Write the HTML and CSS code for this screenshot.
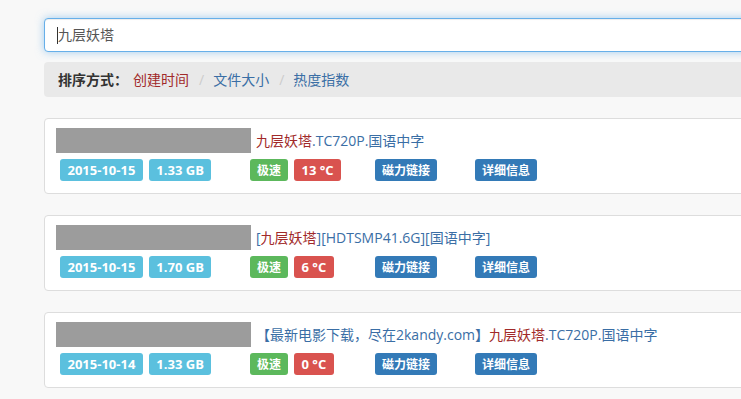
FILE: index.html
```html
<!DOCTYPE html>
<html lang="zh-CN">
<head>
<meta charset="utf-8">
<title>九层妖塔 - 搜索</title>
<link rel="stylesheet" href="styles.css">
</head>
<body>
<div class="page">
  <div class="search-box"><span class="caret"></span><span class="search-text">九层妖塔</span></div>

  <div class="sort-bar">
    <span class="sort-label">排序方式：</span>
    <a class="sort-item active" href="#">创建时间</a>
    <span class="sep">/</span>
    <a class="sort-item" href="#">文件大小</a>
    <span class="sep">/</span>
    <a class="sort-item" href="#">热度指数</a>
  </div>

  <div class="card">
    <div class="card-title">
      <span class="mask"></span>
      <a class="title-link" href="#"><span class="hl">九层妖塔</span>.TC720P.国语中字</a>
    </div>
    <div class="card-meta">
      <div class="meta-group"><span class="label info latin">2015-10-15</span><span class="label info latin">1.33 GB</span></div>
      <div class="meta-group"><span class="label success">极速</span><span class="label danger latin">13 °C</span></div>
      <div class="meta-group"><span class="label primary">磁力链接</span></div>
      <div class="meta-group"><span class="label primary">详细信息</span></div>
    </div>
  </div>

  <div class="card">
    <div class="card-title">
      <span class="mask"></span>
      <a class="title-link" href="#">[<span class="hl">九层妖塔</span>][HDTSMP41.6G][国语中字]</a>
    </div>
    <div class="card-meta">
      <div class="meta-group"><span class="label info latin">2015-10-15</span><span class="label info latin">1.70 GB</span></div>
      <div class="meta-group"><span class="label success">极速</span><span class="label danger latin">6 °C</span></div>
      <div class="meta-group"><span class="label primary">磁力链接</span></div>
      <div class="meta-group"><span class="label primary">详细信息</span></div>
    </div>
  </div>

  <div class="card">
    <div class="card-title">
      <span class="mask"></span>
      <a class="title-link" href="#">【最新电影下载，尽在2kandy.com】<span class="hl">九层妖塔</span>.TC720P.国语中字</a>
    </div>
    <div class="card-meta">
      <div class="meta-group"><span class="label info latin">2015-10-14</span><span class="label info latin">1.33 GB</span></div>
      <div class="meta-group"><span class="label success">极速</span><span class="label danger latin">0 °C</span></div>
      <div class="meta-group"><span class="label primary">磁力链接</span></div>
      <div class="meta-group"><span class="label primary">详细信息</span></div>
    </div>
  </div>
</div>
</body>
</html>
```

FILE: styles.css
```css
html, body {
  margin: 0;
  padding: 0;
  overflow: hidden;
  background: #f8f8f8;
}

body {
  font-family: "Open Sans", "Noto Sans CJK SC", sans-serif;
  font-size: 14px;
  color: #333;
}

.page {
  width: 1100px;
  padding: 18px 0 0 44px;
  display: flex;
  flex-direction: column;
}

.search-box {
  height: 34px;
  box-sizing: border-box;
  border: 1px solid #66afe9;
  border-radius: 4px;
  background: #fff;
  box-shadow: inset 0 1px 1px rgba(0,0,0,.075), 0 0 8px rgba(102,175,233,.6);
  display: flex;
  align-items: center;
  padding-left: 12px;
  color: #555;
  line-height: 20px;
}

.caret {
  width: 1px;
  height: 17px;
  background: #333;
}

.sort-bar {
  margin-top: 10px;
  height: 35px;
  box-sizing: border-box;
  background: #e9e9e9;
  border-radius: 4px;
  display: flex;
  align-items: center;
  padding-left: 14px;
  line-height: 20px;
}

.sort-label {
  font-weight: bold;
  color: #333;
  margin-right: 5px;
}

.sort-item {
  color: #3a6ea5;
  text-decoration: none;
}

.sort-item.active {
  color: #a12a2a;
}

.sep {
  color: #ccc;
  margin: 0 9px 0 10px;
}

.card {
  margin-top: 21px;
  background: #fff;
  border: 1px solid #ddd;
  border-radius: 4px;
  padding: 9px 11px 12px;
  display: flex;
  flex-direction: column;
  gap: 6px;
}

.card-title {
  display: flex;
  align-items: center;
  height: 25px;
}

.mask {
  width: 195px;
  height: 25px;
  background: #9c9c9c;
  margin-right: 5px;
}

.title-link {
  color: #3a6ea5;
  text-decoration: none;
  line-height: 20px;
  padding-top: 1px;
}

.hl {
  color: #a12a2a;
}

.card-meta {
  display: grid;
  grid-template-columns: 190px 125px 100px auto;
  margin-left: 4px;
}

.meta-group {
  display: flex;
  gap: 6px;
}

.label {
  display: inline-flex;
  align-items: center;
  height: 22px;
  padding: 0 7px;
  border-radius: 3px;
  color: #fff;
  font-weight: bold;
  font-size: 12px;
}

.label.latin {
  font-size: 13px;
  padding: 0 7.5px;
}

.info { background: #5bc0de; }
.success { background: #5cb85c; }
.danger { background: #d9534f; }
.primary { background: #337ab7; }
```
